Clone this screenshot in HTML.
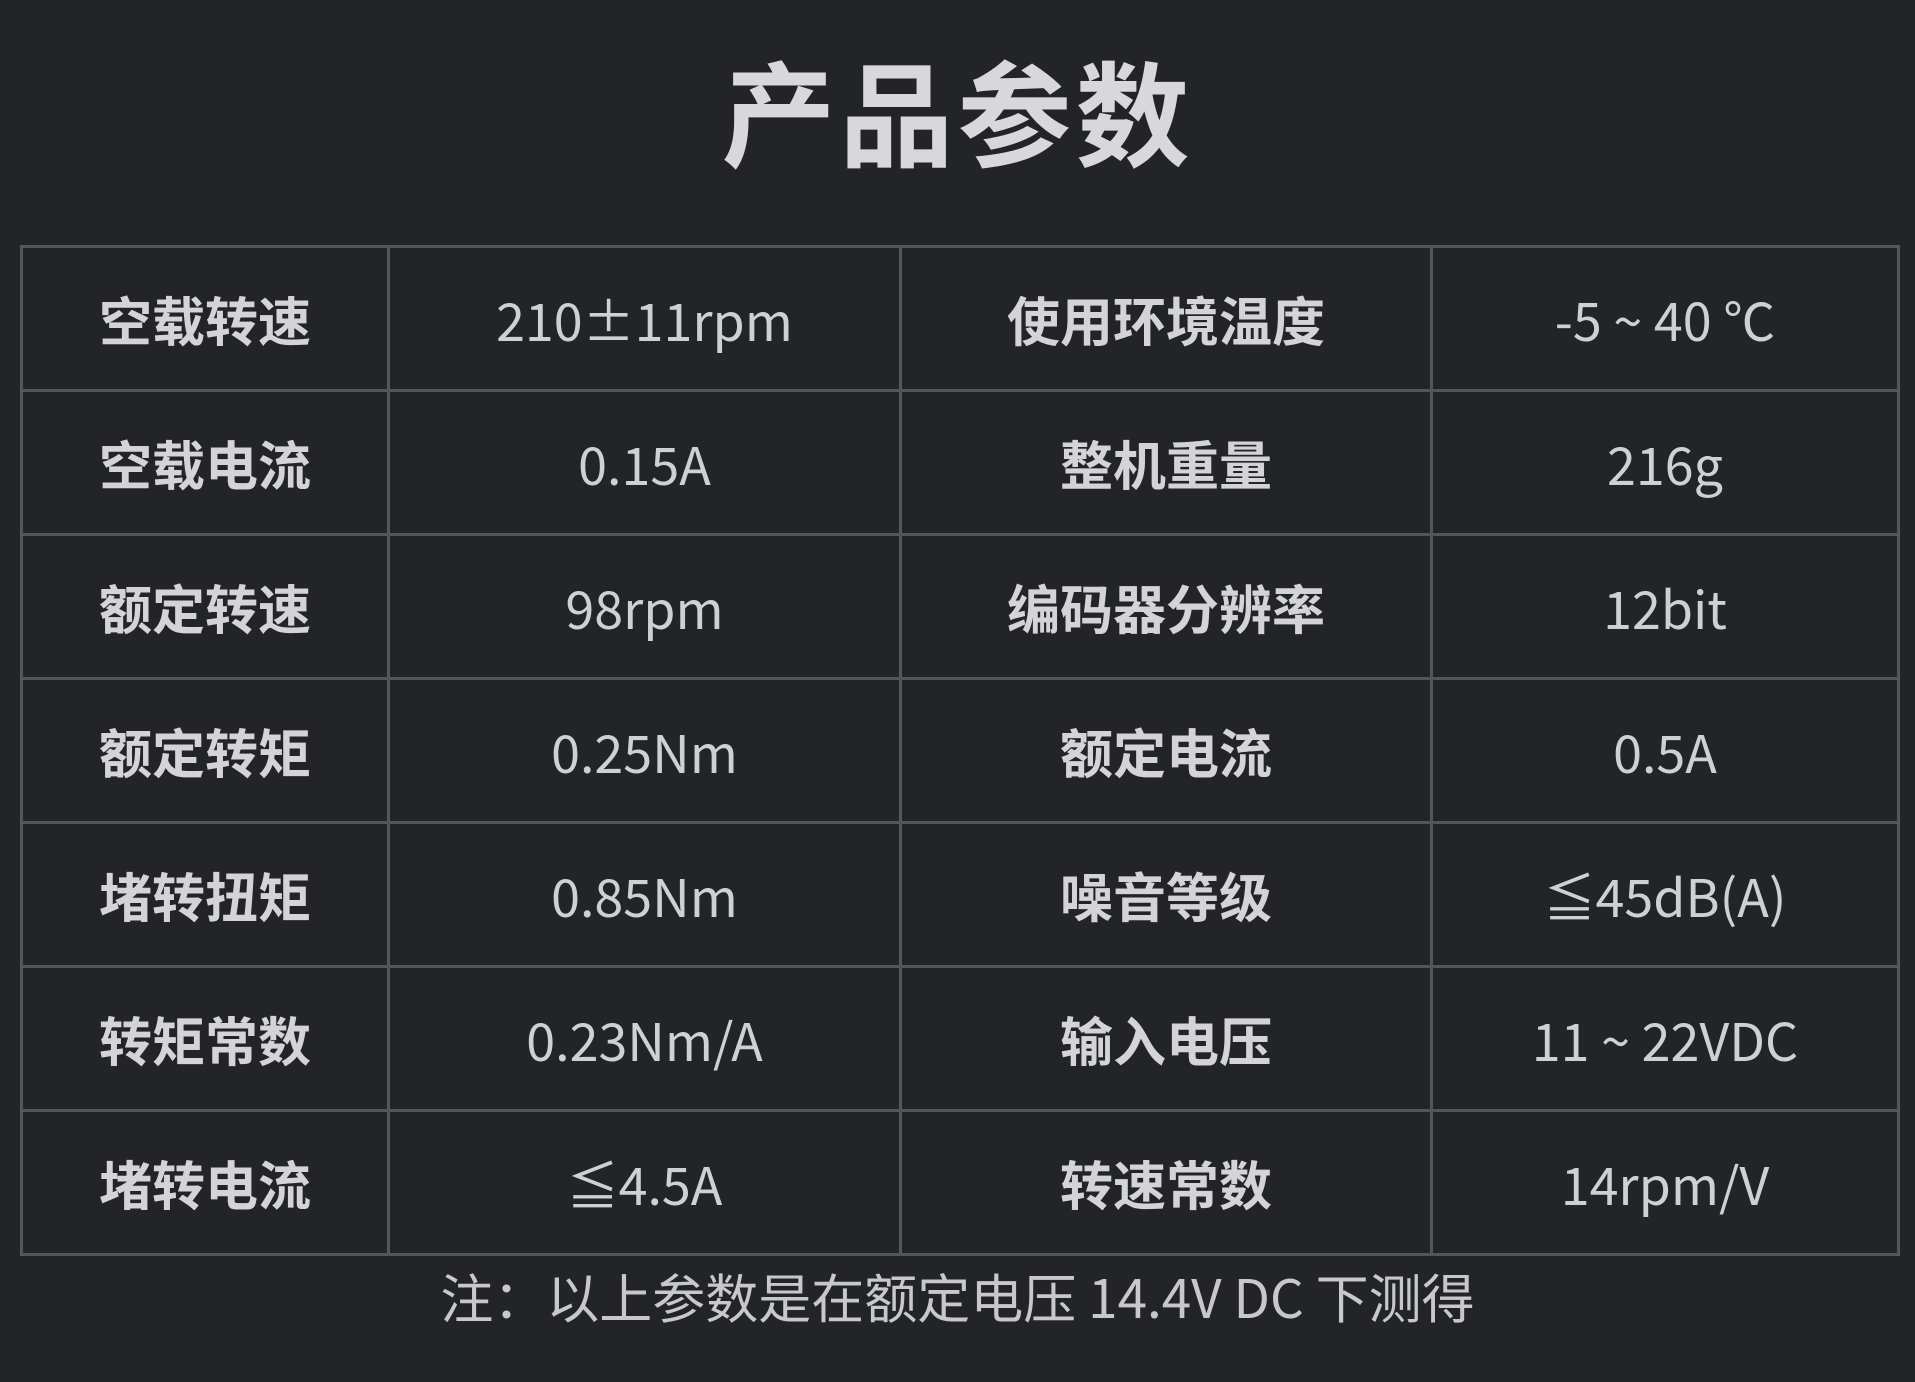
<!DOCTYPE html>
<html><head><meta charset="utf-8"><style>
html,body{margin:0;padding:0;}
body{width:1915px;height:1382px;background:#232428;overflow:hidden;position:relative;font-family:"Liberation Sans","Noto Sans CJK SC",sans-serif;color:#d2d2d4;}
h1{position:absolute;top:44px;left:0;width:1915px;text-align:center;margin:0;font-size:114px;font-weight:700;color:#d8d8da;letter-spacing:4px;line-height:130px;font-family:"Noto Sans CJK SC",sans-serif;}
table{position:absolute;left:20px;top:245px;width:1877px;border-collapse:collapse;table-layout:fixed;}
td{border:3px solid #55565a;text-align:center;font-size:52px;font-family:"Noto Sans CJK SC",sans-serif;font-weight:400;color:#cfd0d2;padding:0;height:141px;}
td.l{font-weight:700;color:#d4d4d6;font-size:53px;}
.note{position:absolute;top:1264px;left:0;width:1915px;text-align:center;font-size:53px;font-family:"Noto Sans CJK SC",sans-serif;font-weight:400;color:#c8c8ca;line-height:64px;}
</style></head><body>
<h1>产品参数</h1>
<table>
<colgroup><col style="width:367px"><col style="width:512px"><col style="width:531px"><col style="width:467px"></colgroup>
<tr><td class="l">空载转速</td><td>210±11rpm</td><td class="l">使用环境温度</td><td>-5 ~ 40 ℃</td></tr>
<tr><td class="l">空载电流</td><td>0.15A</td><td class="l">整机重量</td><td>216g</td></tr>
<tr><td class="l">额定转速</td><td>98rpm</td><td class="l">编码器分辨率</td><td>12bit</td></tr>
<tr><td class="l">额定转矩</td><td>0.25Nm</td><td class="l">额定电流</td><td>0.5A</td></tr>
<tr><td class="l">堵转扭矩</td><td>0.85Nm</td><td class="l">噪音等级</td><td>≦45dB(A)</td></tr>
<tr><td class="l">转矩常数</td><td>0.23Nm/A</td><td class="l">输入电压</td><td>11 ~ 22VDC</td></tr>
<tr><td class="l">堵转电流</td><td>≦4.5A</td><td class="l">转速常数</td><td>14rpm/V</td></tr>
</table>
<div class="note">注：以上参数是在额定电压 14.4V DC 下测得</div>
</body></html>
